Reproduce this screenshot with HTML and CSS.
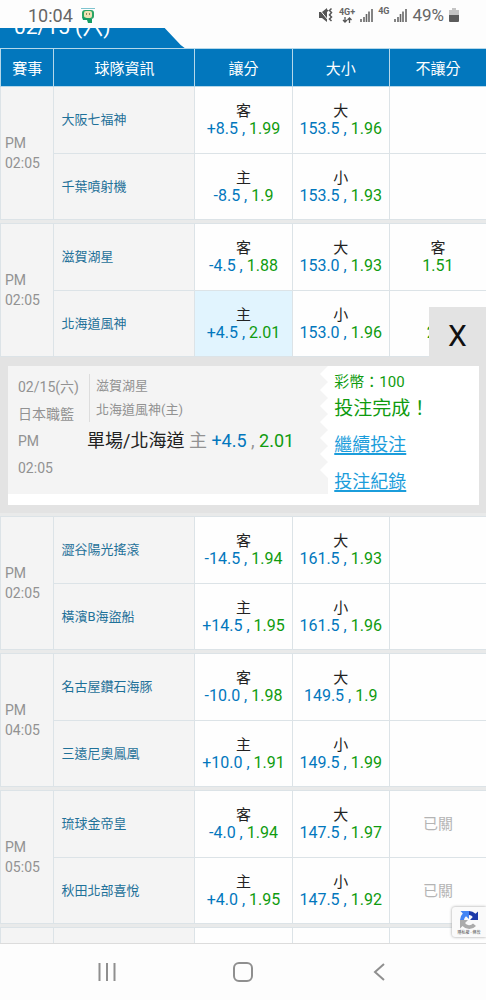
FILE: index.html
```html
<!DOCTYPE html>
<html lang="zh-Hant">
<head>
<meta charset="utf-8">
<meta name="viewport" content="width=device-width, initial-scale=1">
<title>賽事投注</title>
<link rel="stylesheet" href="styles.css">
</head>
<body>
<header class="status">
  <span class="clock">10:04</span>
  <svg class="app-icon" width="16" height="16" viewBox="0 0 16 16" aria-hidden="true"><path d="M1 1.500h14" stroke="#7fc4cf"/><rect x="2" y="3" width="12" height="9" rx="3" fill="#2aa566"/><rect x="4" y="4" width="8" height="7" rx="2" fill="#f0e2b4"/><path d="M6.500 6v2M9.500 6v2" stroke="#8d8a5c"/><path d="M2 10l1 3 4 0 1 3h4v-4z" fill="#159c63"/></svg>
  <span class="status-right">
    <svg width="16" height="16" viewBox="0 0 16 16" aria-hidden="true"><path d="M1 5h3l5-4v14l-5-4H1z" fill="#555"/><path d="M1 2l9 11" stroke="#fff" stroke-width="1"/><path d="M10 3L7 6M13.500 1.500l-2 2 2 2-2 2.500 2 2-2 2 2 2" stroke="#555" stroke-width="1.500" fill="none"/></svg>
    <span class="net">4G+<svg width="10" height="6" viewBox="0 0 10 6" aria-hidden="true"><path d="M3 0v5M1 3l2 2 2-2M7.500 6V1M5.500 3l2-2 2 2" stroke="#555" stroke-width="1.300" fill="none"/></svg></span>
    <svg class="bars" width="13" height="14" viewBox="0 0 13 14" aria-hidden="true"><path d="M1 11v3M4 9v5M6.500 6v8M9 3.500V14M12 1v13" stroke="#666" stroke-width="1.600"/></svg>
    <span class="net net-top">4G</span>
    <svg class="bars" width="13" height="14" viewBox="0 0 13 14" aria-hidden="true"><path d="M1 11v3M4 9v5M6.500 6v8M9 3.500V14M12 1v13" stroke="#666" stroke-width="1.600"/></svg>
    <span class="battery-text">49%</span>
    <svg width="10" height="14" viewBox="0 0 10 14" aria-hidden="true"><path d="M3 0h4v2h3v5H0V2h3z" fill="#c4c4c4"/><path d="M0 7h10v6q0 1-1 1H1q-1 0-1-1z" fill="#5c5c5c"/></svg>
  </span>
</header>

<main class="page">
  <h1 class="date-tab">02/15 (六)</h1>
  <table class="odds">
    <colgroup><col class="c-time"><col class="c-team"><col class="c-odd"><col class="c-odd"><col class="c-odd"></colgroup>
    <thead><tr><th scope="col">賽事</th><th scope="col">球隊資訊</th><th scope="col">讓分</th><th scope="col">大小</th><th scope="col">不讓分</th></tr></thead>
    <tbody>
      <tr class="away"><td class="time" rowspan="2">PM<br>02:05</td><td class="team">大阪七福神</td><td>客<span class="odd"><b>+8.5 ,</b> <i>1.99</i></span></td><td>大<span class="odd"><b>153.5 ,</b> <i>1.96</i></span></td><td></td></tr>
      <tr><td class="team">千葉噴射機</td><td>主<span class="odd"><b>-8.5 ,</b> <i>1.9</i></span></td><td>小<span class="odd"><b>153.5 ,</b> <i>1.93</i></span></td><td></td></tr>
      <tr class="gap"><td colspan="5"></td></tr>
    </tbody>
    <tbody>
      <tr class="away"><td class="time" rowspan="2">PM<br>02:05</td><td class="team">滋賀湖星</td><td>客<span class="odd"><b>-4.5 ,</b> <i>1.88</i></span></td><td>大<span class="odd"><b>153.0 ,</b> <i>1.93</i></span></td><td>客<span class="odd"><i>1.51</i></span></td></tr>
      <tr><td class="team">北海道風神</td><td class="picked">主<span class="odd"><b>+4.5 ,</b> <i>2.01</i></span></td><td>小<span class="odd"><b>153.0 ,</b> <i>1.96</i></span></td><td>主<span class="odd"><i>2.3</i></span></td></tr>
      <tr><td class="slip-cell" colspan="5">
        <button class="close" type="button" aria-label="關閉">X</button>
        <div class="slip">
          <div class="ticket">
            <div class="when">02/15(六)<br>日本職籃<br>PM<br>02:05</div>
            <div class="match">
              <div class="sides">滋賀湖星<br>北海道風神(主)</div>
              <div class="pick">單場/北海道 <span>主</span> <b>+4.5</b> <span>,</span> <i>2.01</i></div>
            </div>
            <svg class="teeth" width="8" height="128" viewBox="0 0 8 128" aria-hidden="true"><path d="M8 0L0 8l8 8-8 8 8 8-8 8 8 8-8 8 8 8-8 8 8 8-8 8 8 8-8 8 8 8z" fill="#fff"/></svg>
          </div>
          <div class="result">
            <div class="coins">彩幣：100</div>
            <div class="done">投注完成！</div>
            <a href="#bet">繼續投注</a>
            <a href="#history">投注紀錄</a>
          </div>
        </div>
      </td></tr>
      <tr class="gap"><td colspan="5"></td></tr>
    </tbody>
    <tbody>
      <tr class="away"><td class="time" rowspan="2">PM<br>02:05</td><td class="team">澀谷陽光搖滾</td><td>客<span class="odd"><b>-14.5 ,</b> <i>1.94</i></span></td><td>大<span class="odd"><b>161.5 ,</b> <i>1.93</i></span></td><td></td></tr>
      <tr><td class="team">橫濱B海盜船</td><td>主<span class="odd"><b>+14.5 ,</b> <i>1.95</i></span></td><td>小<span class="odd"><b>161.5 ,</b> <i>1.96</i></span></td><td></td></tr>
      <tr class="gap"><td colspan="5"></td></tr>
    </tbody>
    <tbody>
      <tr class="away"><td class="time" rowspan="2">PM<br>04:05</td><td class="team">名古屋鑽石海豚</td><td>客<span class="odd"><b>-10.0 ,</b> <i>1.98</i></span></td><td>大<span class="odd"><b>149.5 ,</b> <i>1.9</i></span></td><td></td></tr>
      <tr><td class="team">三遠尼奧鳳凰</td><td>主<span class="odd"><b>+10.0 ,</b> <i>1.91</i></span></td><td>小<span class="odd"><b>149.5 ,</b> <i>1.99</i></span></td><td></td></tr>
      <tr class="gap"><td colspan="5"></td></tr>
    </tbody>
    <tbody>
      <tr class="away"><td class="time" rowspan="2">PM<br>05:05</td><td class="team">琉球金帝皇</td><td>客<span class="odd"><b>-4.0 ,</b> <i>1.94</i></span></td><td>大<span class="odd"><b>147.5 ,</b> <i>1.97</i></span></td><td class="closed">已關</td></tr>
      <tr><td class="team">秋田北部喜悅</td><td>主<span class="odd"><b>+4.0 ,</b> <i>1.95</i></span></td><td>小<span class="odd"><b>147.5 ,</b> <i>1.92</i></span></td><td class="closed">已關</td></tr>
      <tr class="gap"><td colspan="5"></td></tr>
    </tbody>
    <tbody><tr><td class="time"></td><td class="team"></td><td></td><td></td><td></td></tr></tbody>
  </table>
  <div class="captcha">
    <svg width="20" height="20" viewBox="0 0 20 20" aria-hidden="true"><path d="M10 1a9 9 0 0 1 6.500 2.800L19 1.500V10h-8l2.800-3A5 5 0 0 0 10 5z" fill="#1c3aa9"/><path d="M10 1v8L7 6.200A5 5 0 0 0 5 10H1a9 9 0 0 1 2.800-6.500L1.500 1z" fill="#4285f4"/><path d="M1 10h8l-3 3a5 5 0 0 0 8 .5l3 2.500A9 9 0 0 1 3.500 16L1 18.500z" fill="#ababab"/></svg>
    <span>隱私權 - 條款</span>
  </div>
</main>

<nav class="nav">
  <button type="button" aria-label="最近使用"><svg width="18" height="18" viewBox="0 0 18 18"><path d="M1.500 0v18M9 0v18M16.500 0v18" stroke="#8f8f8f" stroke-width="2"/></svg></button>
  <button type="button" aria-label="主畫面"><svg width="20" height="20" viewBox="0 0 20 20"><rect x="1" y="1" width="18" height="18" rx="5" fill="none" stroke="#8f8f8f" stroke-width="2"/></svg></button>
  <button type="button" aria-label="返回"><svg width="18" height="18" viewBox="0 0 18 18"><path d="M14 1L5 9l9 8" fill="none" stroke="#8f8f8f" stroke-width="2"/></svg></button>
</nav>
</body>
</html>
```
FILE: styles.css
```css
* { box-sizing: border-box; }

body {
  margin: 0;
  height: 100vh;
  display: flex;
  flex-direction: column;
  overflow: hidden;
  background: #fdfdfd;
  color: #222;
  font-family: Roboto, "Noto Sans CJK TC", sans-serif;
  font-size: 16px;
}

b, i { font-style: normal; font-weight: 400; }
b { color: #0277bd; }
i { color: #0f9b0f; }
button { border: 0; padding: 0; background: none; font: inherit; }

.status {
  flex: none;
  height: 28px;
  padding: 2px 27px 0 28px;
  display: flex;
  align-items: center;
  color: #666;
}
.clock { font-size: 18px; }
.app-icon { margin-left: 7px; }
.status-right { margin-left: auto; display: flex; align-items: center; gap: 5px; }
.net {
  display: flex;
  flex-direction: column;
  align-items: center;
  font-size: 9px;
  line-height: 9px;
  font-weight: 700;
}
.net-top { padding-bottom: 7px; }
.battery-text { font-size: 17px; }

.page { flex: 1; min-height: 0; overflow: hidden; position: relative; border-bottom: 1px solid #dcdcdc; }

.date-tab {
  width: 38%;
  height: 20px;
  margin: 0;
  padding-left: 14px;
  display: flex;
  align-items: flex-end;
  overflow: hidden;
  background: #0277bd;
  clip-path: polygon(0 0, calc(100% - 20px) 0, calc(100% - 4px) 17px, 100% 100%, 0 100%);
  color: #fff;
  font-size: 21px;
  font-weight: 400;
  line-height: 42px;
}

.odds { width: 100%; table-layout: fixed; border-collapse: separate; border-spacing: 0; }
.c-time { width: 11%; }
.c-team { width: 29%; }
.c-odd { width: 20%; }

.odds th {
  height: 39px;
  padding: 0;
  background: #0277bd;
  border: 1px solid #b5d8ea;
  border-width: 1px 0 1px 1px;
  color: #fff;
  font-size: 15px;
  font-weight: 400;
}
.odds td {
  height: 66px;
  padding: 0;
  background: #fefefe;
  border: 1px solid #dce3e7;
  border-width: 0 0 1px 1px;
  text-align: center;
  font-size: 15px;
  line-height: 18px;
}
.odds .away td { height: 67px; }
.odds td.time {
  padding-left: 4px;
  background: #f4f4f4;
  color: #929292;
  text-align: left;
  font-size: 14px;
  line-height: 20px;
}
.odds td.team {
  padding-left: 7px;
  background: #f4f4f4;
  color: #1f7199;
  text-align: left;
  font-size: 13px;
}
.odds td.picked { background: #e1f4fe; }
.odds td.closed { color: #b4b4b4; }
.odd { display: block; font-size: 16px; }
.odds .gap td { height: 4px; background: #e9eaea; border-left: 0; line-height: 0; }

.odds td.slip-cell {
  position: relative;
  height: auto;
  padding: 9px 7px 8px 8px;
  border: 0;
  background: #e3e3e3;
  text-align: left;
}
.close {
  position: absolute;
  right: 0;
  bottom: 100%;
  width: 57px;
  height: 50px;
  padding-top: 7px;
  background: #e3e3e3;
  color: #111;
  font-size: 30px;
}
.slip { display: flex; align-items: flex-start; background: #fff; padding-bottom: 5px; }
.ticket {
  position: relative;
  flex: 0 0 68%;
  min-height: 128px;
  display: flex;
  padding: 8px 0 0 10px;
  background: #f4f4f4;
  color: #929292;
}
.when { flex: 0 0 69px; font-size: 14px; line-height: 27px; }
.sides {
  margin-left: 2px;
  padding-left: 6px;
  border-left: 1px solid #ddd;
  font-size: 13px;
  line-height: 24px;
}
.pick { margin-top: 7px; font-size: 18px; line-height: 24px; color: #222; white-space: nowrap; }
.pick span { color: #929292; }
.teeth { position: absolute; right: 0; top: 0; }
.result { padding: 6px 0 0 6px; display: flex; flex-direction: column; align-items: flex-start; color: #0f9b0f; }
.coins { font-size: 15px; line-height: 20px; }
.done { font-size: 19px; line-height: 34px; }
.result a { color: #1b9ddb; font-size: 18px; line-height: 37px; text-decoration-thickness: 2px; text-underline-offset: 2px; }

.captcha {
  position: absolute;
  right: 0;
  bottom: 6px;
  width: 34px;
  height: 30px;
  display: flex;
  flex-direction: column;
  align-items: center;
  justify-content: center;
  overflow: hidden;
  background: #fafafa;
  border-radius: 3px 0 0 3px;
  box-shadow: 0 0 3px #999;
  color: #555;
  font-size: 4px;
  line-height: 5px;
}

.nav { flex: none; height: 56px; display: flex; justify-content: space-between; align-items: center; padding: 0 22%; }
.nav button { display: flex; justify-content: center; width: 20px; margin: 0 -10px; }
.nav svg { flex: none; }
```
